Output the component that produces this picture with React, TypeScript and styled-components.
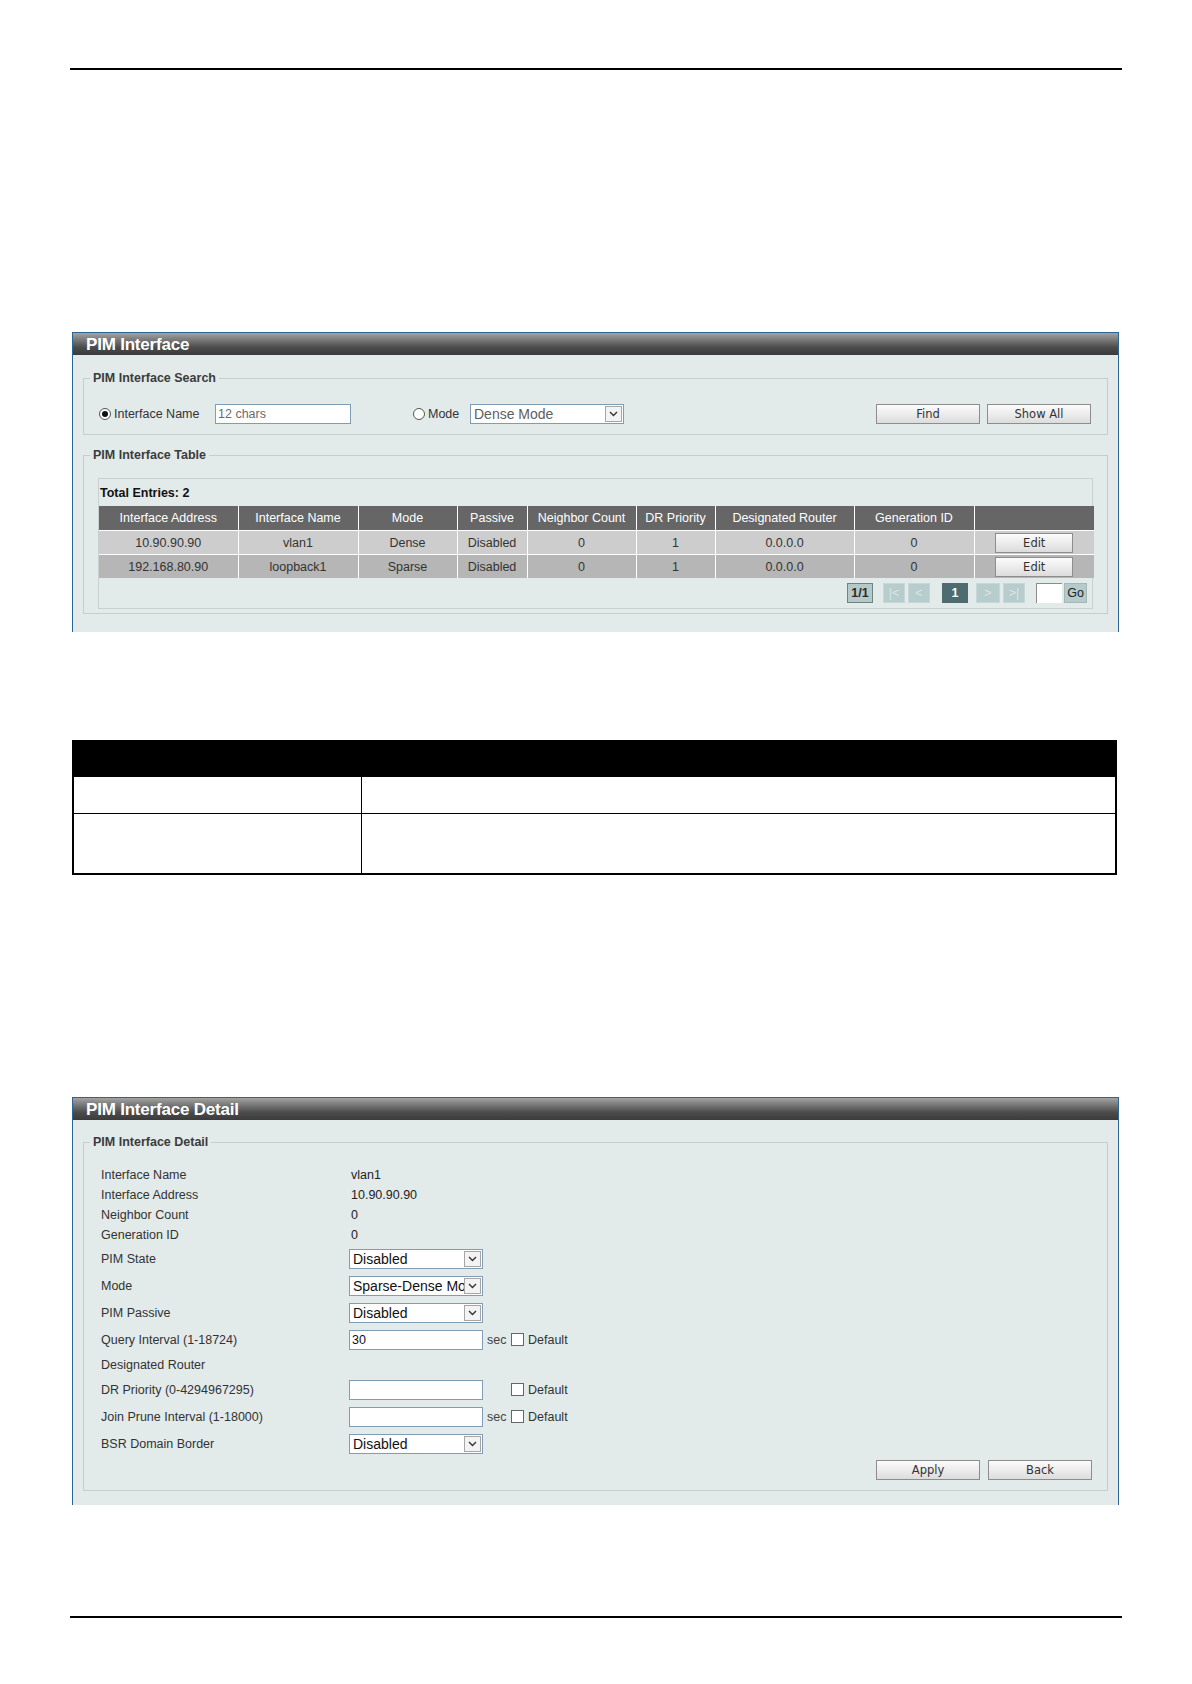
import React from "react";
import styled, { createGlobalStyle, css } from "styled-components";

const GlobalStyle = createGlobalStyle`
  html, body {
    margin: 0;
    padding: 0;
    background: #fff;
  }
  body {
    font-family: "Liberation Sans", Arial, sans-serif;
    color: #333;
  }
`;

const Page = styled.div`
  display: flow-root;
  width: 1192px;
  height: 1684px;
  overflow: hidden;
`;

const Rule = styled.div<{ $mt: number }>`
  margin: ${(p) => p.$mt}px 0 0 70px;
  width: 1052px;
  height: 2px;
  background: #000;
`;

const BottomEdge = styled.div`
  display: flex;
  align-items: flex-end;
  margin-top: 66px;
  height: 3px;
`;

const EdgeLine = styled.div`
  width: 905px;
  height: 1px;
  background: #000;
`;

const EdgeMark = styled.div`
  margin-left: 253px;
  width: 1px;
  height: 3px;
  background: #333;
`;

/* ---------- panel shell ---------- */

const Panel = styled.section<{ $mt: number }>`
  margin: ${(p) => p.$mt}px 0 0 72px;
  width: 1047px;
  box-sizing: border-box;
  border: 1px solid #2a6596;
  border-bottom: none;
  background: #e2eaea;
`;

const PanelTitle = styled.div`
  height: 22px;
  line-height: 23px;
  padding-left: 13px;
  background: linear-gradient(
    to bottom,
    #a3a3a3 0%,
    #7a7a7a 30%,
    #4c4c4c 65%,
    #3b3b3b 100%
  );
  color: #fff;
  font-size: 17px;
  font-weight: bold;
  letter-spacing: -0.2px;
`;

const PanelBody = styled.div<{ $pt: number; $pb: number }>`
  padding: ${(p) => p.$pt}px 10px ${(p) => p.$pb}px;
`;

const Group = styled.fieldset<{ $mt?: number }>`
  margin: ${(p) => p.$mt ?? 0}px 0 0;
  padding: 0;
  min-width: 0;
  border: 1px solid #c4cece;
`;

const GroupLegend = styled.legend`
  margin-left: 6px;
  padding: 0 3px;
  font-size: 12.5px;
  font-weight: bold;
  line-height: 14px;
  color: #3c3c3c;
`;

/* ---------- form controls ---------- */

const Radio = styled.span<{ $checked?: boolean }>`
  position: relative;
  display: inline-block;
  flex: none;
  width: 12px;
  height: 12px;
  box-sizing: border-box;
  border: 1px solid #555;
  border-radius: 50%;
  background: #fff;
  ${(p) =>
    p.$checked &&
    css`
      &::after {
        content: "";
        position: absolute;
        inset: 2px;
        border-radius: 50%;
        background: #111;
      }
    `}
`;

const Check = styled.span`
  display: inline-block;
  flex: none;
  width: 13px;
  height: 13px;
  box-sizing: border-box;
  border: 1px solid #666;
  background: #fff;
`;

const TextBox = styled.input<{ $w: number; $muted?: boolean }>`
  width: ${(p) => p.$w}px;
  height: 20px;
  box-sizing: border-box;
  margin: 0;
  padding: 0 2px;
  border: 1px solid #7f9db9;
  background: #fff;
  font-family: "Liberation Sans", Arial, sans-serif;
  font-size: 12.5px;
  color: ${(p) => (p.$muted ? "#6b6b6b" : "#111")};
  outline: none;
`;

const Select = styled.div<{ $w: number; $muted?: boolean }>`
  display: flex;
  align-items: center;
  width: ${(p) => p.$w}px;
  height: 20px;
  box-sizing: border-box;
  border: 1px solid #7f9db9;
  background: #fff;
  padding-left: 3px;
  font-size: 14px;
  color: ${(p) => (p.$muted ? "#5e5e5e" : "#111")};
  overflow: hidden;
`;

const SelectText = styled.span`
  flex: 1;
  min-width: 0;
  white-space: nowrap;
  overflow: hidden;
`;

const SelectArrow = styled.span`
  display: flex;
  align-items: center;
  justify-content: center;
  flex: none;
  width: 17px;
  height: 16px;
  margin-right: 1px;
  box-sizing: border-box;
  border: 1px solid #a6a6a6;
  background: #f3f3f3;
`;

const DropDown = ({ value, w, muted }: { value: string; w: number; muted?: boolean }) => (
  <Select $w={w} $muted={muted}>
    <SelectText>{value}</SelectText>
    <SelectArrow>
      <svg width="9" height="6" viewBox="0 0 9 6">
        <path d="M1 1 L4.5 4.5 L8 1" fill="none" stroke="#333" strokeWidth="1.4" />
      </svg>
    </SelectArrow>
  </Select>
);

const Button = styled.button<{ $w: number; $ml?: number }>`
  width: ${(p) => p.$w}px;
  height: 20px;
  margin: 0 0 0 ${(p) => p.$ml ?? 0}px;
  padding: 0;
  flex: none;
  box-sizing: border-box;
  border: 1px solid #8d8d8d;
  background: linear-gradient(to bottom, #fbfbfb 0%, #ececec 50%, #dcdcdc 100%);
  font-family: "DejaVu Sans", Verdana, sans-serif;
  font-size: 11.5px;
  color: #333;
`;

/* ---------- search section ---------- */

const SearchRow = styled.div`
  display: flex;
  align-items: center;
  height: 20px;
  padding: 19px 16px 10px 15px;
  font-size: 12.5px;
`;

const RadioLabel = styled.label<{ $w: number; $ml?: number }>`
  display: flex;
  align-items: center;
  gap: 3px;
  width: ${(p) => p.$w}px;
  margin-left: ${(p) => p.$ml ?? 0}px;
  flex: none;
  color: #333;
`;

const Spacer = styled.div`
  flex: 1;
`;

/* ---------- table section ---------- */

const TableBox = styled.div`
  margin: 16px 14px 4px;
  border: 1px solid #c8d1d1;
`;

const TotalRow = styled.div`
  height: 27px;
  line-height: 28px;
  padding-left: 1px;
  font-size: 12.5px;
  font-weight: bold;
  color: #111;
`;

const DataTable = styled.table`
  width: 100%;
  border-collapse: collapse;
  table-layout: fixed;
  font-size: 12.5px;
`;

const HeadCell = styled.th`
  height: 24px;
  padding: 0;
  background: #666;
  color: #fff;
  font-weight: normal;
  text-align: center;
  white-space: nowrap;
  border-bottom: 1px solid #fff;
  & + & {
    border-left: 1px solid #fff;
  }
`;

const BodyRow = styled.tr<{ $alt?: boolean }>`
  background: ${(p) => (p.$alt ? "#b6b6b6" : "#cdcdcd")};
`;

const BodyCell = styled.td`
  height: 23px;
  padding: 0;
  text-align: center;
  color: #333;
  border-bottom: 1px solid #fff;
  & + & {
    border-left: 1px solid #fff;
  }
  tr:last-child > & {
    border-bottom: none;
  }
`;

const EditButton = styled(Button)`
  display: block;
  margin: 0 auto;
  height: 20px;
`;

const Pager = styled.div`
  display: flex;
  justify-content: flex-end;
  align-items: center;
  height: 20px;
  margin: 5px 5px 5px 0;
  font-size: 12.5px;
`;

type PageKind = "count" | "nav" | "current" | "go";

const pageKinds: Record<PageKind, ReturnType<typeof css>> = {
  count: css`
    background: #b5c9c9;
    border: 1px solid #6f8383;
    color: #2a2a2a;
    font-weight: bold;
  `,
  nav: css`
    background: #b7cccc;
    border: 1px solid #c7d6d6;
    color: #dbe6e6;
  `,
  current: css`
    background: #4e6b6f;
    border: 1px solid #4e6b6f;
    color: #fff;
    font-weight: bold;
  `,
  go: css`
    background: #b5caca;
    border: 1px solid #a5b8b8;
    color: #222;
  `,
};

const PageBox = styled.span<{ $kind: PageKind; $w: number; $ml?: number }>`
  display: flex;
  align-items: center;
  justify-content: center;
  width: ${(p) => p.$w}px;
  height: 20px;
  margin-left: ${(p) => p.$ml ?? 0}px;
  box-sizing: border-box;
  ${(p) => pageKinds[p.$kind]}
`;

const PageInput = styled.span<{ $ml: number }>`
  width: 26px;
  height: 20px;
  margin-left: ${(p) => p.$ml}px;
  box-sizing: border-box;
  border-top: 1px solid #8a8a8a;
  border-left: 1px solid #8a8a8a;
  background: #fff;
`;

/* ---------- parameter description table ---------- */

const InfoTable = styled.table`
  margin: 108px 0 0 72px;
  width: 1045px;
  border-collapse: collapse;
  table-layout: fixed;
  border-left: 2px solid #000;
  border-right: 2px solid #000;
  border-bottom: 2px solid #000;
`;

const InfoHead = styled.th`
  height: 36px;
  padding: 0;
  background: #000;
`;

const InfoCell = styled.td<{ $h: number }>`
  height: ${(p) => p.$h}px;
  padding: 0;
  border-top: 1px solid #000;
  & + & {
    border-left: 1px solid #000;
  }
`;

/* ---------- detail section ---------- */

const DetailRows = styled.div`
  padding: 16px 15px 0 17px;
  font-size: 12.5px;
`;

const DetailRow = styled.div<{ $h: number }>`
  display: flex;
  align-items: center;
  height: ${(p) => p.$h}px;
`;

const DetailLabel = styled.div`
  width: 248px;
  flex: none;
  color: #333;
`;

const DetailValue = styled.div`
  padding-left: 2px;
  color: #222;
`;

const Suffix = styled.span`
  width: 28px;
  flex: none;
  padding-left: 4px;
  box-sizing: border-box;
  color: #444;
`;

const CheckLabel = styled.span`
  display: flex;
  align-items: center;
  gap: 4px;
  color: #333;
`;

const ActionRow = styled.div`
  display: flex;
  justify-content: flex-end;
  gap: 8px;
  padding: 3px 15px 10px 0;
`;

const columns = [
  { title: "Interface Address", w: 139 },
  { title: "Interface Name", w: 120 },
  { title: "Mode", w: 99 },
  { title: "Passive", w: 70 },
  { title: "Neighbor Count", w: 109 },
  { title: "DR Priority", w: 79 },
  { title: "Designated Router", w: 139 },
  { title: "Generation ID", w: 120 },
  { title: "", w: 120 },
];

const interfaces = [
  ["10.90.90.90", "vlan1", "Dense", "Disabled", "0", "1", "0.0.0.0", "0"],
  ["192.168.80.90", "loopback1", "Sparse", "Disabled", "0", "1", "0.0.0.0", "0"],
];

const infoRows = [{ h: 36 }, { h: 59 }];

const DefaultCheck = ({ unit }: { unit?: string }) => (
  <>
    <Suffix>{unit ?? ""}</Suffix>
    <CheckLabel>
      <Check />
      Default
    </CheckLabel>
  </>
);

export default function App() {
  return (
    <Page>
      <GlobalStyle />
      <Rule $mt={68} />

      <Panel $mt={262}>
        <PanelTitle>PIM Interface</PanelTitle>
        <PanelBody $pt={16} $pb={18}>
          <Group>
            <GroupLegend>PIM Interface Search</GroupLegend>
            <SearchRow>
              <RadioLabel $w={116}>
                <Radio $checked />
                Interface Name
              </RadioLabel>
              <TextBox $w={136} $muted defaultValue="12 chars" />
              <RadioLabel $w={57} $ml={62}>
                <Radio />
                Mode
              </RadioLabel>
              <DropDown value="Dense Mode" w={154} muted />
              <Spacer />
              <Button $w={104}>Find</Button>
              <Button $w={104} $ml={7}>
                Show All
              </Button>
            </SearchRow>
          </Group>

          <Group $mt={13}>
            <GroupLegend>PIM Interface Table</GroupLegend>
            <TableBox>
              <TotalRow>Total Entries: 2</TotalRow>
              <DataTable>
                <colgroup>
                  {columns.map((c, i) => (
                    <col key={i} style={{ width: c.w }} />
                  ))}
                </colgroup>
                <thead>
                  <tr>
                    {columns.map((c, i) => (
                      <HeadCell key={i}>{c.title}</HeadCell>
                    ))}
                  </tr>
                </thead>
                <tbody>
                  {interfaces.map((row, r) => (
                    <BodyRow key={r} $alt={r % 2 === 1}>
                      {row.map((v, i) => (
                        <BodyCell key={i}>{v}</BodyCell>
                      ))}
                      <BodyCell>
                        <EditButton $w={78}>Edit</EditButton>
                      </BodyCell>
                    </BodyRow>
                  ))}
                </tbody>
              </DataTable>
              <Pager>
                <PageBox $kind="count" $w={26}>1/1</PageBox>
                <PageBox $kind="nav" $w={22} $ml={10}>|&lt;</PageBox>
                <PageBox $kind="nav" $w={22} $ml={3}>&lt;</PageBox>
                <PageBox $kind="current" $w={26} $ml={12}>1</PageBox>
                <PageBox $kind="nav" $w={24} $ml={8}>&gt;</PageBox>
                <PageBox $kind="nav" $w={22} $ml={3}>&gt;|</PageBox>
                <PageInput $ml={11} />
                <PageBox $kind="go" $w={23} $ml={2}>Go</PageBox>
              </Pager>
            </TableBox>
          </Group>
        </PanelBody>
      </Panel>

      <InfoTable>
        <colgroup>
          <col style={{ width: 288 }} />
          <col />
        </colgroup>
        <thead>
          <tr>
            <InfoHead />
            <InfoHead />
          </tr>
        </thead>
        <tbody>
          {infoRows.map((r, i) => (
            <tr key={i}>
              <InfoCell $h={r.h} />
              <InfoCell $h={r.h} />
            </tr>
          ))}
        </tbody>
      </InfoTable>

      <Panel $mt={222}>
        <PanelTitle>PIM Interface Detail</PanelTitle>
        <PanelBody $pt={15} $pb={14}>
          <Group>
            <GroupLegend>PIM Interface Detail</GroupLegend>
            <DetailRows>
              <DetailRow $h={20}>
                <DetailLabel>Interface Name</DetailLabel>
                <DetailValue>vlan1</DetailValue>
              </DetailRow>
              <DetailRow $h={20}>
                <DetailLabel>Interface Address</DetailLabel>
                <DetailValue>10.90.90.90</DetailValue>
              </DetailRow>
              <DetailRow $h={20}>
                <DetailLabel>Neighbor Count</DetailLabel>
                <DetailValue>0</DetailValue>
              </DetailRow>
              <DetailRow $h={20}>
                <DetailLabel>Generation ID</DetailLabel>
                <DetailValue>0</DetailValue>
              </DetailRow>
              <DetailRow $h={27}>
                <DetailLabel>PIM State</DetailLabel>
                <DropDown value="Disabled" w={134} />
              </DetailRow>
              <DetailRow $h={27}>
                <DetailLabel>Mode</DetailLabel>
                <DropDown value="Sparse-Dense Mode" w={134} />
              </DetailRow>
              <DetailRow $h={27}>
                <DetailLabel>PIM Passive</DetailLabel>
                <DropDown value="Disabled" w={134} />
              </DetailRow>
              <DetailRow $h={27}>
                <DetailLabel>Query Interval (1-18724)</DetailLabel>
                <TextBox $w={134} defaultValue="30" />
                <DefaultCheck unit="sec" />
              </DetailRow>
              <DetailRow $h={23}>
                <DetailLabel>Designated Router</DetailLabel>
              </DetailRow>
              <DetailRow $h={27}>
                <DetailLabel>DR Priority (0-4294967295)</DetailLabel>
                <TextBox $w={134} />
                <DefaultCheck />
              </DetailRow>
              <DetailRow $h={27}>
                <DetailLabel>Join Prune Interval (1-18000)</DetailLabel>
                <TextBox $w={134} />
                <DefaultCheck unit="sec" />
              </DetailRow>
              <DetailRow $h={27}>
                <DetailLabel>BSR Domain Border</DetailLabel>
                <DropDown value="Disabled" w={134} />
              </DetailRow>
            </DetailRows>
            <ActionRow>
              <Button $w={104}>Apply</Button>
              <Button $w={104}>Back</Button>
            </ActionRow>
          </Group>
        </PanelBody>
      </Panel>

      <Rule $mt={111} />
      <BottomEdge>
        <EdgeLine />
        <EdgeMark />
      </BottomEdge>
    </Page>
  );
}
